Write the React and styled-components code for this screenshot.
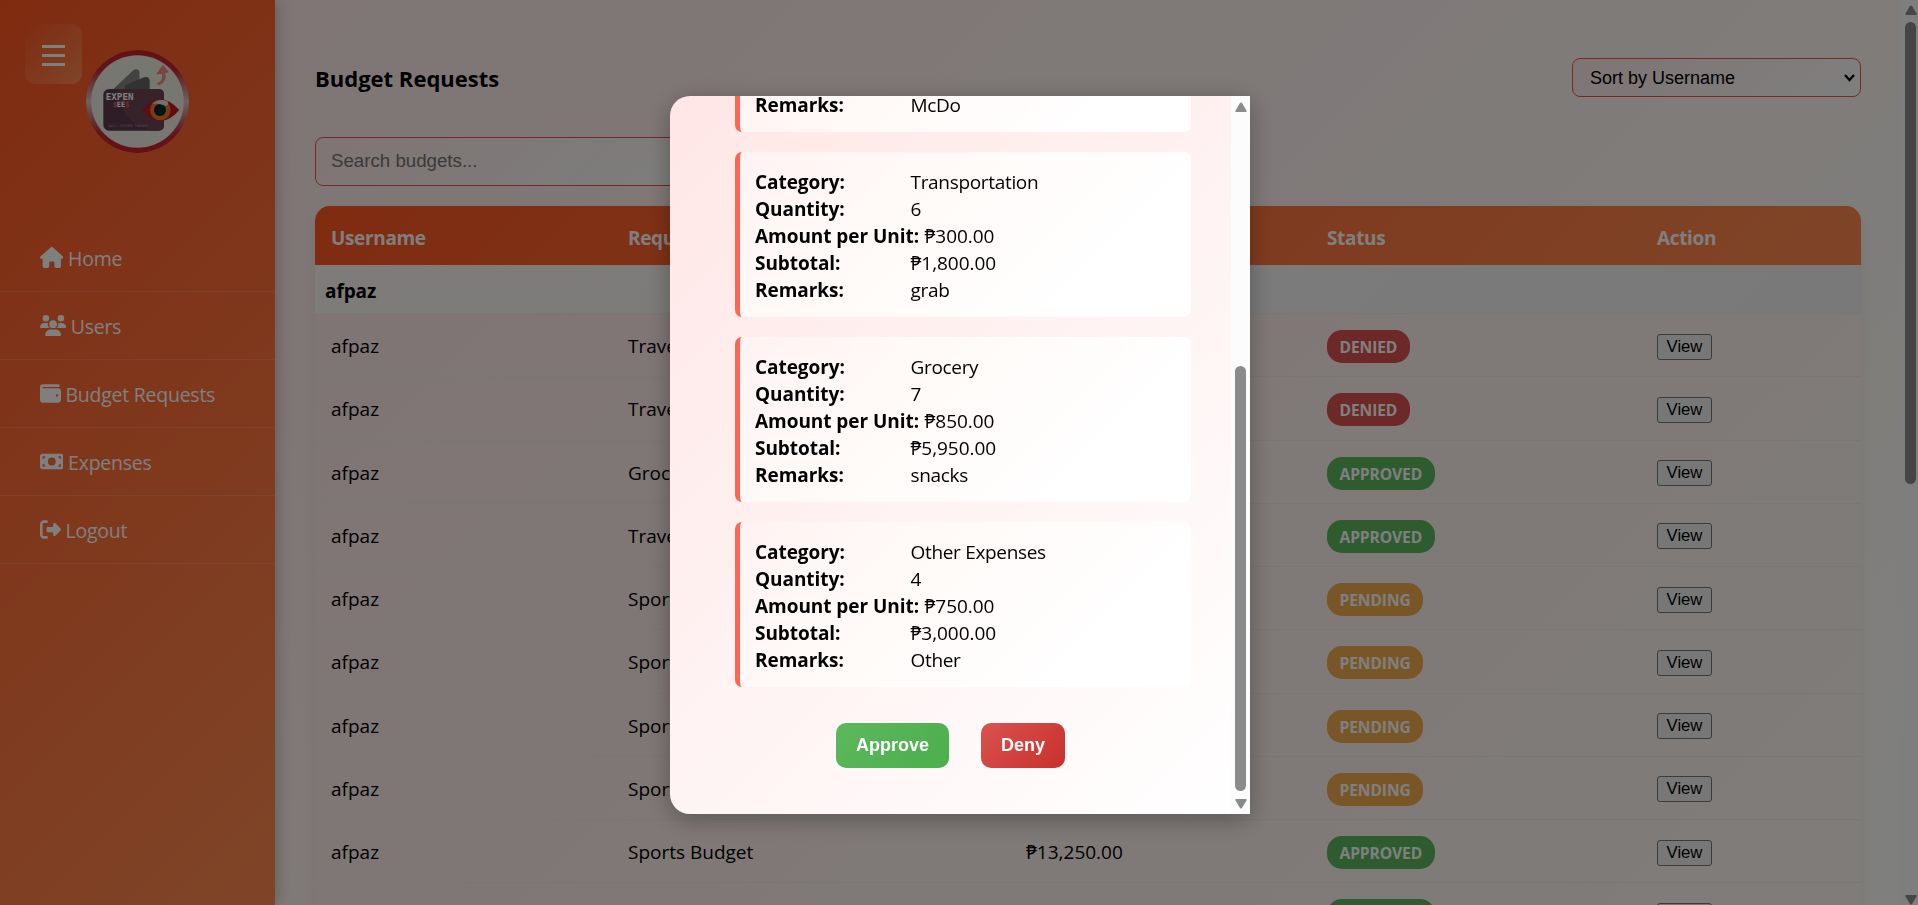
import React from "react";
import styled, { createGlobalStyle } from "styled-components";
import { FaHouse, FaUsers, FaWallet, FaMoneyBill, FaRightFromBracket } from "react-icons/fa6";

const GlobalStyle = createGlobalStyle`
  *, *::before, *::after { box-sizing: border-box; }
  html, body { margin: 0; height: 100%; overflow: hidden; }
  body {
    font-family: "Open Sans", "Noto Sans", sans-serif;
    font-size: 19px;
    line-height: 27px;
    color: #000;
  }
  button, input, select { font-family: "Liberation Sans", Arial, sans-serif; }
`;

const Page = styled.div`
  display: flex;
  height: 905px;
  overflow: hidden;
  background: linear-gradient(135deg, #ffe9e9 0%, #fffdf8 85%, #fffefb 100%);
`;

const Sidebar = styled.aside`
  position: relative;
  z-index: 1;
  flex: 0 0 275px;
  background: linear-gradient(135deg, #ff5722, #ff8a50);
  box-shadow: 3px 0 13px rgba(0, 0, 0, 0.2);
`;

const MenuButton = styled.button`
  position: absolute;
  left: 25px;
  top: 24px;
  width: 57px;
  height: 60px;
  border: 0;
  border-radius: 10px;
  background: linear-gradient(135deg, #ff5722, #ff8a50);
  display: flex;
  flex-direction: column;
  align-items: center;
  justify-content: center;
  gap: 6px;
  padding: 3px 0 0;
`;

const MenuBar = styled.span`
  width: 23px;
  height: 3px;
  background: #fff;
`;

const LogoRing = styled.div`
  width: 103px;
  height: 103px;
  margin: 50px auto 71px 86px;
  border-radius: 50%;
  overflow: hidden;
  svg { display: block; }
`;

const NavItem = styled.a`
  display: flex;
  align-items: center;
  gap: 5px;
  height: 68px;
  padding: 1px 0 0 39.5px;
  border-bottom: 1px solid rgba(255, 255, 255, 0.14);
  color: #fff;
  font-size: 19.5px;
  letter-spacing: -0.25px;
  svg { height: 21px; width: ${(p) => p.$icon}px; flex: none; margin-bottom: 2px; }
`;

const Main = styled.main`
  flex: 1;
  min-width: 0;
  padding: 58px 57px 0 40px;
`;

const TopBar = styled.header`
  display: flex;
  justify-content: space-between;
  align-items: flex-start;
  height: 79px;
`;

const Title = styled.h3`
  margin: 5px 0 0;
  font-size: 22px;
  line-height: 30px;
`;

const SortBox = styled.div`
  width: 289px;
  height: 39px;
  padding: 0 5px 0 17px;
  border: 1px solid #f4514a;
  border-radius: 8px;
  background: linear-gradient(135deg, #ffe9e9, #fefffe);
  display: flex;
  align-items: center;
  justify-content: space-between;
  font: 18px/36px "Liberation Sans", Arial, sans-serif;
`;

const Search = styled.input`
  display: block;
  width: 500px;
  height: 49px;
  padding: 0 15px 1px;
  border: 1px solid #f4514a;
  border-radius: 8px;
  background: linear-gradient(135deg, #ffe9e9, #fafbf7 70%);
  font-size: 18.7px;
  &::placeholder { color: #757575; opacity: 1; }
`;

const Table = styled.section`
  margin-top: 20px;
  width: 1546px;
  height: 760px;
  border-radius: 15px 15px 0 0;
  overflow: hidden;
  background: linear-gradient(135deg, #ffe9e9, #fffaf4);
  box-shadow: 0 4px 14px rgba(0, 0, 0, 0.06);
`;

const Row = styled.div`
  display: grid;
  grid-template-columns: 297px 398px 301px 330px 220px;
  align-items: center;
  height: 63.25px;
  padding-top: 1px;
  border-bottom: 1px solid #eeeeea;
  > * { padding-left: 16px; }
  > span { padding-top: 2px; }
`;

const HeadRow = styled(Row)`
  height: 59px;
  border: 0;
  background: linear-gradient(135deg, #ff5722, #ff8a50);
  color: #fff;
  font-weight: 700;
  letter-spacing: -0.35px;
  > span { padding-top: 4px; }
`;

const GroupRow = styled.div`
  height: 49px;
  padding: 13px 10px 9px;
  border-bottom: 1px solid #f0eeee;
  background: linear-gradient(135deg, #fcf8f4, #f5f6f5 60%, #f2f3f2);
  font-weight: 700;
  letter-spacing: -0.1px;
`;

const colors = { DENIED: "#d9534f", APPROVED: "#5cb85c", PENDING: "#f0ad4e" };

const Badge = styled.span`
  display: block;
  width: fit-content;
  height: 33px;
  margin-top: 2px;
  padding: 0 12.5px;
  border-radius: 15px;
  background: ${(p) => p.$color};
  color: #fff;
  font-size: 15.6px;
  font-weight: 700;
  line-height: 35px;
  letter-spacing: -0.1px;
`;

const ViewButton = styled.button`
  display: block;
  width: 55px;
  height: 26px;
  margin-top: 2px;
  padding: 0;
  border: 1px solid #767676;
  border-radius: 3px;
  background: #efefef;
  color: #000;
  font-size: 16.67px;
  line-height: 22px;
`;

const Overlay = styled.div`
  position: fixed;
  inset: 0;
  z-index: 5;
  padding: 96px 0 0 670px;
  background: rgba(0, 0, 0, 0.5);
`;

const Modal = styled.div`
  display: flex;
  width: 580px;
  height: 718px;
  border-radius: 20px 0 0 20px;
  overflow: hidden;
  background: linear-gradient(135deg, #ffe6e6, #fff);
`;

const ModalFrame = styled.div`
  width: 580px;
  border-radius: 20px 0 0 20px;
  box-shadow: 0 5px 25px rgba(0, 0, 0, 0.3);
`;

const ModalBody = styled.div`
  flex: 1;
  display: flex;
  flex-direction: column;
  justify-content: flex-end;
  gap: 20px;
  padding: 0 40px 46px 65px;
`;

const Item = styled.div`
  flex: none;
  padding: 17px 15px 13px;
  border-left: 5px solid #ff6454;
  border-radius: 7px;
  background: linear-gradient(135deg, #fff3f2, #fffaf8 35%, #fff 80%);
`;

const Field = styled.div`
  display: flex;
  gap: 5.5px;
  height: 27px;
  white-space: nowrap;
`;

const Label = styled.strong`
  min-width: 150px;
  letter-spacing: -0.05px;
`;

const Value = styled.span`
  letter-spacing: ${(p) => (p.$numeric ? "-0.05px" : "-0.32px")};
`;

const Actions = styled.div`
  display: flex;
  gap: 32px;
  margin: 16px 0 0 101px;
`;

const ActionButton = styled.button`
  width: ${(p) => p.$w}px;
  height: 45px;
  padding: 0 0 1px;
  border: 0;
  border-radius: 10px;
  background: linear-gradient(135deg, ${(p) => p.$from}, ${(p) => p.$to});
  color: #fff;
  font-size: 18px;
  font-weight: 700;
`;

const Track = styled.div`
  width: 19px;
  padding: 6px 3px 5px 4px;
  display: flex;
  flex-direction: column;
  justify-content: space-between;
  background: #fcfcfc;
  svg { display: block; flex: none; }
`;

const PageTrack = styled(Track)`
  position: absolute;
  right: -2px;
  top: 0;
  height: 905px;
  padding: 5px 3px 0 4px;
`;

const Thumb = styled.div`
  width: 11px;
  height: ${(p) => p.$h}px;
  margin: ${(p) => p.$top}px 0 auto;
  border-radius: 6px;
  background: #8b8b8b;
`;

const Arrow = ({ down }) => (
  <svg width="12" height="10" viewBox="0 0 12 10">
    <path
      d={down ? "M1 0H11Q12 .3 11.5 1.5L7 9Q6 10 5 9L.5 1.5Q0 .3 1 0Z" : "M1 10H11Q12 9.7 11.5 8.5L7 1Q6 0 5 1L.5 8.5Q0 9.7 1 10Z"}
      fill="#8b8b8b"
    />
  </svg>
);

const Logo = () => (
  <svg width="103" height="103" viewBox="48 30 309 309">
    <defs>
      <linearGradient id="ring" x1="0" y1="0" x2="0" y2="1">
        <stop offset="0" stopColor="#c8202c" />
        <stop offset=".2" stopColor="#c22c38" />
        <stop offset=".5" stopColor="#dcc4c4" />
        <stop offset=".8" stopColor="#c22c38" />
        <stop offset="1" stopColor="#c8202c" />
      </linearGradient>
    </defs>
    <circle cx="202.500" cy="184.500" r="154.500" fill="url(#ring)" />
    <circle cx="202.500" cy="184.500" r="139" fill="#efeee2" />
    <path d="M127 150L190 91Q200 83 208 93L210 150Z" fill="#858587" />
    <path d="M165 150V136L222 112Q238 108 239 122V152Z" fill="#646466" />
    <rect x="100" y="147" width="182" height="125" rx="17" fill="#5c384c" />
    <path d="M143 147H266Q282 147 282 163V256Q282 272 266 272H245Q150 250 143 147Z" fill="#6c4452" />
    <path d="M258 131Q281 123 276 102L258 103L279 74L297 97L286 99Q292 122 269 136Z" fill="#f08c84" />
    <path d="M216 210Q270 145 328 210Q270 277 216 210Z" fill="#c01820" />
    <circle cx="271" cy="210" r="31" fill="#f0762c" />
    <circle cx="270" cy="210" r="18" fill="#002a33" />
    <path d="M246 192Q266 174 291 183Q300 193 288 198Q264 187 246 192Z" fill="#e6dede" />
    <g fontFamily="DejaVu Sans Mono, monospace" fontWeight="700">
      <text x="107" y="180" fontSize="26" textLength="84" lengthAdjust="spacingAndGlyphs" fill="#fff">EXPEN</text>
      <text x="128" y="202" fontSize="22" textLength="50" lengthAdjust="spacingAndGlyphs" fill="#fff">
        <tspan fill="#f0586c">$</tspan>EE<tspan fill="#f0586c">$</tspan>
      </text>
      <text x="114" y="261" fontSize="10" fontWeight="400" textLength="120" fill="#a88c98">DAILY EXPENSE TRACKER</text>
    </g>
  </svg>
);

const nav = [
  ["Home", FaHouse, 23.6],
  ["Users", FaUsers, 26.2],
  ["Budget Requests", FaWallet, 21],
  ["Expenses", FaMoneyBill, 23.6],
  ["Logout", FaRightFromBracket, 21],
];

const rows = [
  ["Travel Budget", "", "DENIED"],
  ["Travel Budget", "", "DENIED"],
  ["Grocery Budget", "", "APPROVED"],
  ["Travel Budget", "", "APPROVED"],
  ["Sports Budget", "", "PENDING"],
  ["Sports Budget", "", "PENDING"],
  ["Sports Budget", "", "PENDING"],
  ["Sports Budget", "", "PENDING"],
  ["Sports Budget", "₱13,250.00", "APPROVED"],
  ["", "", "APPROVED"],
];

const items = [
  [["Remarks:", "McDo"]],
  [["Category:", "Transportation"], ["Quantity:", "6"], ["Amount per Unit:", "₱300.00"], ["Subtotal:", "₱1,800.00"], ["Remarks:", "grab"]],
  [["Category:", "Grocery"], ["Quantity:", "7"], ["Amount per Unit:", "₱850.00"], ["Subtotal:", "₱5,950.00"], ["Remarks:", "snacks"]],
  [["Category:", "Other Expenses"], ["Quantity:", "4"], ["Amount per Unit:", "₱750.00"], ["Subtotal:", "₱3,000.00"], ["Remarks:", "Other"]],
];

export default function App() {
  return (
    <>
      <GlobalStyle />
      <Page>
        <Sidebar>
          <MenuButton aria-label="Menu">
            <MenuBar /><MenuBar /><MenuBar />
          </MenuButton>
          <LogoRing><Logo /></LogoRing>
          <nav>
            {nav.map(([name, Icon, width]) => (
              <NavItem key={name} $icon={width}><Icon />{name}</NavItem>
            ))}
          </nav>
        </Sidebar>
        <Main>
          <TopBar>
            <Title>Budget Requests</Title>
            <SortBox>
              Sort by Username
              <svg width="11" height="8" viewBox="0 0 11 8">
                <path d="M1 1L5.500 6L10 1" fill="none" stroke="#000" strokeWidth="2.200" />
              </svg>
            </SortBox>
          </TopBar>
          <Search placeholder="Search budgets..." />
          <Table>
            <HeadRow>
              <span>Username</span><span>Request Title</span><span>Total Amount</span><span>Status</span><span>Action</span>
            </HeadRow>
            <GroupRow>afpaz</GroupRow>
            {rows.map(([title, total, status], i) => (
              <Row key={i}>
                <span>{i < 9 ? "afpaz" : ""}</span>
                <span>{title}</span>
                <span>{total}</span>
                <div><Badge $color={colors[status]}>{status}</Badge></div>
                <div><ViewButton>View</ViewButton></div>
              </Row>
            ))}
          </Table>
        </Main>
        <PageTrack><Arrow /><Thumb $top={7} $h={462} /><Arrow down /></PageTrack>
      </Page>
      <Overlay>
        <ModalFrame>
          <Modal>
            <ModalBody>
              {items.map((fields, i) => (
                <Item key={i}>
                  {fields.map(([k, v]) => (
                    <Field key={k}><Label>{k}</Label><Value $numeric={v[0] === "₱"}>{v}</Value></Field>
                  ))}
                </Item>
              ))}
              <Actions>
                <ActionButton $w={113} $from="#5cb85c" $to="#4cae4c">Approve</ActionButton>
                <ActionButton $w={84} $from="#d9534f" $to="#c9302c">Deny</ActionButton>
              </Actions>
            </ModalBody>
            <Track><Arrow /><Thumb $top={254} $h={425} /><Arrow down /></Track>
          </Modal>
        </ModalFrame>
      </Overlay>
    </>
  );
}
